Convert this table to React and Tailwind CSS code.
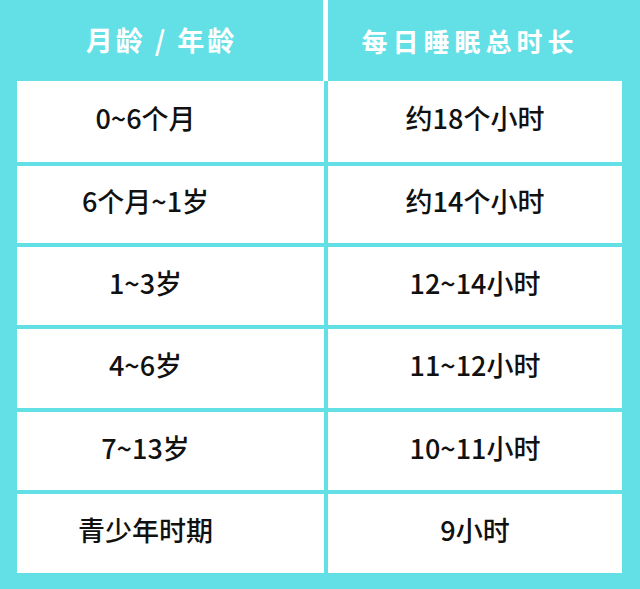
export default function App() {
  const rows = [
    ["0~6个月", "约18个小时", "h-[81px]"],
    ["6个月~1岁", "约14个小时", "h-[77px]"],
    ["1~3岁", "12~14小时", "h-[78px]"],
    ["4~6岁", "11~12小时", "h-[79px]"],
    ["7~13岁", "10~11小时", "h-[78px]"],
    ["青少年时期", "9小时", "h-[79px]"],
  ];
  const font = { fontFamily: '"Noto Sans CJK SC", "Noto Sans", sans-serif' };
  return (
    <div className="w-[640px] h-[589px] bg-[#63dfe6] overflow-hidden" style={font}>
      <div className="flex h-[81px]">
        <div className="w-[323px] flex items-center justify-center text-white font-bold text-[27px] tracking-[3px]">
          月龄 / 年龄
        </div>
        <div className="w-[5px] bg-white"></div>
        <div className="flex-1 flex items-center justify-center pr-[28px] text-white font-bold text-[26px] tracking-[5px]">
          每日睡眠总时长
        </div>
      </div>
      <div className="ml-[17px] w-[605px] grid grid-cols-[307px_294px] gap-[4px]">
        {rows.map(([a, b, h], i) => (
          <div key={i} className="contents">
            <div className={`${h} bg-white flex items-center justify-center pr-[50px] pb-[6px] text-[27px] font-medium text-[#111]`}>
              {a}
            </div>
            <div className={`${h} bg-white flex items-center justify-center pb-[6px] text-[27px] font-medium text-[#111]`}>
              {b}
            </div>
          </div>
        ))}
      </div>
    </div>
  );
}
